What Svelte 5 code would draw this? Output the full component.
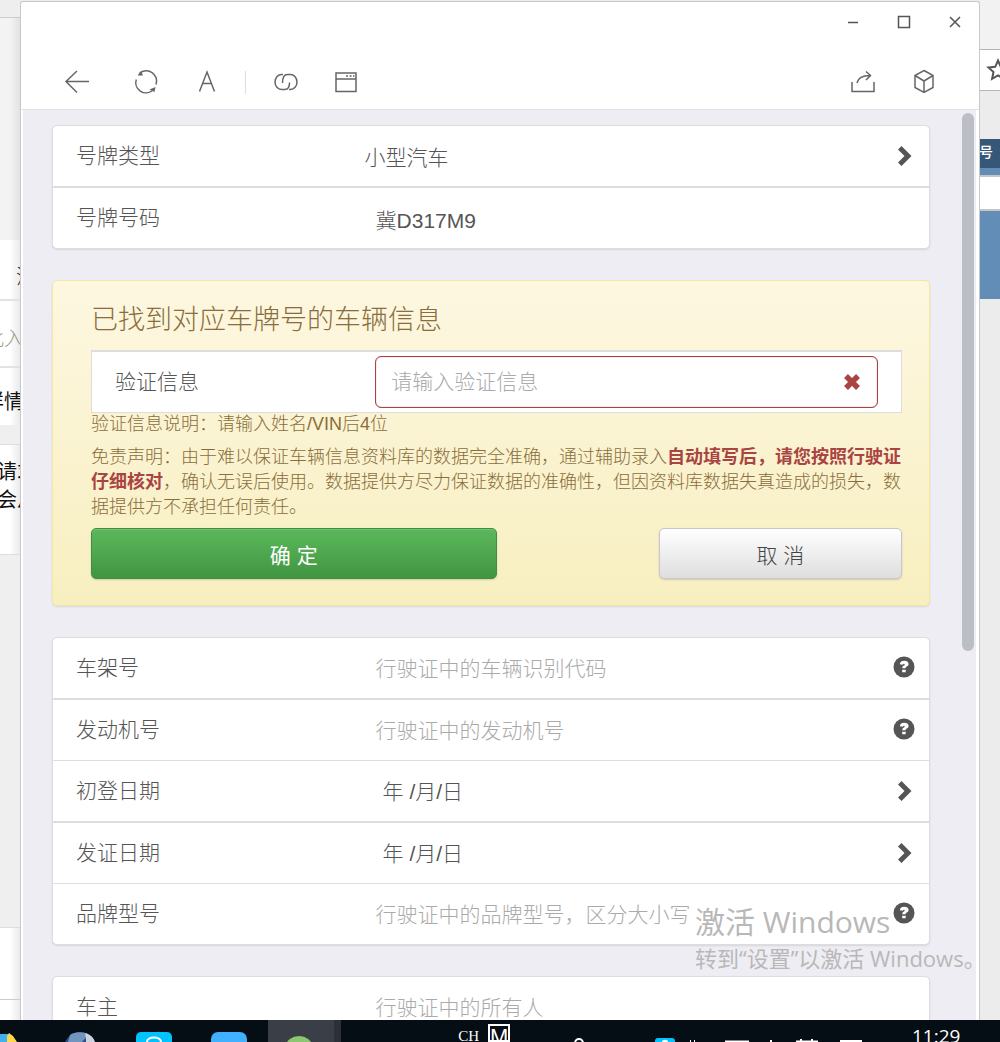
<script>
    let plateType = '小型汽车';
    let plateNo = '冀D317M9';
    let verify = '';

    let fields = [
        {id: 'vin', label: '车架号', hint: '行驶证中的车辆识别代码', icon: 'help'},
        {id: 'engine', label: '发动机号', hint: '行驶证中的发动机号', icon: 'help'},
        {id: 'firstDate', label: '初登日期', hint: '年 /月/日', icon: 'next', date: true},
        {id: 'issueDate', label: '发证日期', hint: '年 /月/日', icon: 'next', date: true},
        {id: 'model', label: '品牌型号', hint: '行驶证中的品牌型号，区分大小写', icon: 'help'}
    ];
    let values = {};
</script>

{#snippet next()}
    <svg class="mark" viewBox="0 0 22 22"><path d="M5 4.500L8.500 1l10 10-10 10L5 17.500l6.500-6.500z" fill="#555"/></svg>
{/snippet}

{#snippet help()}
    <svg class="mark help" viewBox="0 0 22 22">
        <circle cx="11" cy="11" r="10.500" fill="#555"/>
        <path d="M6.800 8.200C7 5.900 8.900 4.800 11.200 4.800c2.600 0 4.400 1.200 4.400 3.300 0 2.400-3 2.300-3 4.100H9.200c0-2.400 2.500-2.700 2.500-3.700 0-1-1.700-.9-1.900.3zM9.200 13.700h3.500v2.600H9.200z" fill="#fff"/>
    </svg>
{/snippet}

<div class="desktop">
    <div class="stage">
        <div class="behind left">
            <div class="l-top"></div>
            <div class="l-grey"></div>
            <div class="l-row first"><span>注</span></div>
            <div class="l-row second"><span>此入</span></div>
            <div class="l-row third"><span>详情</span></div>
            <div class="l-band"></div>
            <div class="l-text"><span>请求</span><span>会从</span></div>
            <div class="l-mid"></div>
            <div class="l-low"></div>
        </div>

        <main class="window">
            <header>
                <div class="controls">
                    <button aria-label="最小化"><svg width="12" height="14"><path d="M1 7.500h10"/></svg></button>
                    <button aria-label="最大化"><svg width="14" height="14"><path d="M1.500 1.500h11v11h-11z"/></svg></button>
                    <button aria-label="关闭"><svg width="12" height="14"><path d="M1 2l10 10M11 2L1 12"/></svg></button>
                </div>
                <nav>
                    <button class="back" aria-label="返回"><svg width="26" height="26"><path d="M25 12.500H2M13 2L2 12.500 13 23.500"/></svg></button>
                    <button class="reload" aria-label="刷新">
                        <svg width="26" height="26">
                            <path d="M6.500 4.500A10.200 10.200 0 0 1 23 15.500M3.300 10.500A10.200 10.200 0 0 0 19.500 21.500"/>
                            <path class="solid" d="M4.500 6.500L8 2l2 4.500zM22.500 18l-1 5-5-2.500z"/>
                        </svg>
                    </button>
                    <button class="font" aria-label="字体"><svg width="20" height="26"><path d="M2.500 22.500L10 3l7.500 19.500M5.500 14.500h9"/></svg></button>
                    <i></i>
                    <button class="link" aria-label="复制链接">
                        <svg width="26" height="26"><path d="M10 5.500H8.500a6.500 7.500 0 0 0 0 15H12c2.800 0 4.500-2.500 4.500-7M9.500 14c0-5.500 2-8.500 5-8.500h3a6.500 7.500 0 0 1 0 15H16"/></svg>
                    </button>
                    <button class="browser" aria-label="浏览器">
                        <svg width="24" height="26"><path d="M2 4h20v18.500H2zM2 10h20"/><path d="M12 7h2M15.500 7h2M19 7h1.500"/></svg>
                    </button>
                    <button class="share" aria-label="分享">
                        <svg width="26" height="26"><path d="M2 13v9.500h22V13M7 14c1-5 5-7.500 13-7.500M16 2.500l4.500 4-4.500 4.500"/></svg>
                    </button>
                    <button class="cube" aria-label="收藏">
                        <svg width="22" height="26"><path d="M11 1.500l9 5v12l-9 5-9-5v-12zM2 6.500l9 5.500 9-5.500M11 12v11.500"/></svg>
                    </button>
                </nav>
            </header>

            <div class="page">
                <form>
                    <section class="card">
                        <div class="row">
                            <label for="plateType">号牌类型</label>
                            <select id="plateType" bind:value={plateType}>
                                <option>小型汽车</option>
                                <option>大型汽车</option>
                            </select>
                            {@render next()}
                        </div>
                        <div class="row">
                            <label for="plateNo">号牌号码</label>
                            <input id="plateNo" type="text" bind:value={plateNo}>
                        </div>
                    </section>

                    <section class="found">
                        <h1>已找到对应车牌号的车辆信息</h1>
                        <div class="row verify">
                            <label for="verify">验证信息</label>
                            <div class="invalid">
                                <input id="verify" type="text" placeholder="请输入验证信息" bind:value={verify}>
                                <svg class="cross" viewBox="0 0 18 18"><path d="M3 3l12 12M15 3L3 15" stroke="#a94442" stroke-width="5.500"/></svg>
                            </div>
                        </div>
                        <p class="tip">验证信息说明：请输入姓名/VIN后4位</p>
                        <p class="legal">免责声明：由于难以保证车辆信息资料库的数据完全准确，通过辅助录入<strong>自动填写后，请您按照行驶证仔细核对</strong>，确认无误后使用。数据提供方尽力保证数据的准确性，但因资料库数据失真造成的损失，数据提供方不承担任何责任。</p>
                        <div class="actions">
                            <button type="button" class="ok">确 定</button>
                            <button type="button" class="cancel">取 消</button>
                        </div>
                    </section>

                    <section class="card">
                        {#each fields as f}
                            <div class="row">
                                <label for={f.id}>{f.label}</label>
                                <input id={f.id} class:date={f.date} type="text" placeholder={f.hint} bind:value={values[f.id]}>
                                {#if f.icon === 'help'}
                                    {@render help()}
                                {:else}
                                    {@render next()}
                                {/if}
                            </div>
                        {/each}
                    </section>

                    <section class="card">
                        <div class="row">
                            <label for="owner">车主</label>
                            <input id="owner" type="text" placeholder="行驶证中的所有人" bind:value={values.owner}>
                        </div>
                    </section>
                </form>
                <div class="thumb"></div>
            </div>
        </main>

        <div class="behind right">
            <div class="r-top"></div>
            <div class="r-star"><svg width="24" height="24"><path d="M12 2.500l2.800 6.300 6.700.7-5 4.500 1.400 6.800-5.900-3.500-5.900 3.500L7.500 14l-5-4.500 6.700-.7z" fill="none" stroke="#555" stroke-width="2"/></svg></div>
            <div class="r-grey"></div>
            <div class="r-head"><span>号</span></div>
            <div class="r-field"></div>
            <div class="r-blue"></div>
        </div>

        <div class="watermark">
            <div class="big">激活 Windows</div>
            <div>转到“设置”以激活 Windows。</div>
        </div>
    </div>

    <footer>
        <svg class="apps" width="350" height="22">
            <path d="M0 14h8v8H0z" fill="#3fb2ee"/>
            <path d="M7 22V16l2-3 4 3 4 6z" fill="#ffd84a"/>
            <circle cx="80" cy="28" r="16" fill="#2d4f86"/>
            <path d="M70 15c4-3 14-4 18 0l-6 7H68z" fill="#7195be"/>
            <path d="M86 13c5 2 8 5 9 9h-9c0-3 0-6-1-8z" fill="#ccd3de"/>
            <rect x="136" y="12" width="36" height="20" rx="5" fill="#00c3ff"/>
            <path d="M147 22c0-6 14-6 14 0" fill="none" stroke="#fff" stroke-width="2"/>
            <rect x="211" y="12" width="36" height="20" rx="7" fill="#41b1ff"/>
            <path d="M268 0h66v22h-66z" fill="#3a3e46"/>
            <path d="M334 0h7v22h-7z" fill="#2d3038"/>
            <ellipse cx="299" cy="26" rx="13" ry="10" fill="#8cc671"/>
        </svg>
        <div class="lang"><span>CH</span><b>M</b></div>
        <svg class="tray" width="300" height="22">
            <circle cx="14" cy="23" r="4" fill="none" stroke="#fff" stroke-width="2"/>
            <rect x="90" y="18" width="20" height="10" rx="3" fill="#00c3ff"/>
            <path d="M97 22c0-3 6-3 6 0" fill="#fff"/>
            <path d="M125 21h1M129 21h1M160 21.500h24M205 21h2M231 21.500h22M236 19v3M247 19v3M275 21h22" stroke="#fff" stroke-width="2"/>
        </svg>
        <time>11:29</time>
    </footer>
</div>

<style>
    :global(body) {
        margin: 0;
    }

    .desktop {
        height: 100vh;
        display: flex;
        flex-direction: column;
        overflow: hidden;
        font-family: "Liberation Sans", "Noto Sans CJK SC", sans-serif;
        font-weight: 300;
        color: #555;
    }

    .desktop * {
        box-sizing: border-box;
    }

    .stage {
        position: relative;
        flex: 1;
        min-height: 0;
        display: flex;
        background: #ececec;
    }

    .behind {
        width: 20px;
        flex: none;
        display: flex;
        flex-direction: column;
        overflow: hidden;
        white-space: nowrap;
        font-family: "Noto Sans CJK SC", sans-serif;
        font-size: 20px;
        line-height: 28px;
        color: #111;
    }

    .left {
        background: linear-gradient(to right, #fff, #fff 50%, #eaeaea);
    }

    .left > div {
        display: flex;
        flex-direction: column;
        align-items: flex-end;
        justify-content: center;
        flex: none;
    }

    .left span {
        margin-right: -4px;
    }

    .l-top {
        height: 18px;
        background: #eee;
        border-bottom: 1px solid #ccc;
    }

    .l-grey {
        height: 222px;
        background: linear-gradient(to right, #f3f3f3, #f3f3f3 50%, #e2e2e2);
    }

    .l-row {
        border-bottom: 2px solid #e2e2e2;
    }

    .first {
        height: 61px;
        padding-top: 12px;
    }

    .left .first {
        align-items: flex-start;
        padding-left: 16px;
    }

    .second {
        height: 67px;
        padding-top: 8px;
        color: #a29c8a;
    }

    .third {
        height: 57px;
        padding-top: 8px;
        border: 0;
        font-weight: 400;
    }

    .l-band, .l-mid {
        height: 20px;
        background: #efefef;
        border-bottom: 1px solid #ddd;
    }

    .l-text {
        height: 109px;
        padding-bottom: 29px;
        font-weight: 400;
    }

    .l-text span {
        margin-right: -17px;
    }

    .left .l-mid {
        height: 374px;
        border-top: 1px solid #ddd;
    }

    .l-low {
        height: 72px;
        border-bottom: 1px solid #ccc;
    }

    .window {
        flex: 1;
        min-width: 0;
        margin-top: 1px;
        display: flex;
        flex-direction: column;
        background: #fff;
        border: 1px solid #c9c9c9;
        border-bottom: 0;
        border-radius: 3px 3px 0 0;
    }

    header {
        flex: none;
        padding: 13px 18px 14px 43px;
        border-bottom: 1px solid #e2e2e4;
    }

    header button {
        display: flex;
        padding: 0;
        border: 0;
        background: none;
    }

    header svg {
        fill: none;
        stroke: #666;
        stroke-width: 1.5;
    }

    .controls svg {
        stroke: #555;
    }

    header .solid {
        fill: #666;
        stroke: none;
    }

    .controls {
        display: flex;
        justify-content: flex-end;
        gap: 38px;
        margin-bottom: 40px;
    }

    nav {
        display: flex;
        align-items: center;
    }

    nav i {
        width: 1px;
        height: 23px;
        margin: 0 27px 0 28px;
        background: #ddd;
    }

    .reload {
        margin: 0 38px 0 43px;
    }

    .browser {
        margin-left: 35px;
    }

    .share {
        margin: 0 37px 0 auto;
    }

    .cube {
        margin-right: 26px;
    }

    .page {
        position: relative;
        flex: 1;
        min-height: 0;
        margin: 0 3px 0 2px;
        background: #eeedf3;
        overflow: hidden;
    }

    form {
        display: flex;
        flex-direction: column;
        gap: 31px;
        padding: 15px 46px 0 29px;
    }

    .thumb {
        position: absolute;
        top: 3px;
        right: 2px;
        width: 12px;
        height: 538px;
        border-radius: 6px;
        background: #bbbec4;
    }

    .card, .found {
        border: 1px solid #ddd;
        border-radius: 5px;
        background: #fff;
        box-shadow: 0 1px 2px rgba(0, 0, 0, .1);
    }

    .row {
        display: grid;
        grid-template-columns: 35% 1fr 36px;
        align-items: center;
        box-sizing: content-box;
        height: 60px;
        font-size: 21px;
    }

    .card .row + .row {
        border-top: 1px solid #ddd;
    }

    .card .row:nth-child(even) {
        border-top-width: 2px;
    }

    label {
        padding: 0 0 4px 23px;
    }

    input, select {
        width: 100%;
        min-width: 0;
        height: 50px;
        padding: 2px 16px 0;
        border: 0;
        outline: 0;
        background: transparent;
        font: inherit;
        color: inherit;
        appearance: none;
    }

    select {
        padding-left: 5px;
    }

    input::placeholder {
        color: #aaa;
        opacity: 1;
    }

    .date {
        padding-left: 23px;
    }

    .date::placeholder {
        color: #555;
    }

    .mark {
        width: 22px;
        height: 22px;
    }

    .help {
        margin-bottom: 3px;
    }

    .found {
        padding: 24px 27px 26px 38px;
        border-color: #f5e79e;
        background: linear-gradient(#fdf7e1, #f8efc0);
        color: #8a6d3b;
    }

    h1 {
        margin: 0 0 15px;
        font-size: 27px;
        line-height: 30px;
        font-weight: 300;
    }

    .verify {
        grid-template-columns: 35% 1fr 23px;
        border: 1px solid #ddd;
        border-top-width: 2px;
        background: #fff;
        color: #555;
    }

    .invalid {
        display: flex;
        align-items: center;
        height: 52px;
        padding-right: 16px;
        border: 1px solid #a94442;
        border-radius: 6px;
        box-shadow: inset 0 0 1px #a94442;
    }

    .invalid input {
        padding: 0 15px;
    }

    .cross {
        width: 18px;
        height: 18px;
        flex: none;
    }

    .tip, .legal {
        margin: 0;
        font-size: 18px;
        line-height: 22px;
    }

    .legal {
        margin: 10px 0 8px;
        line-height: 25px;
    }

    strong {
        font-weight: 700;
        color: #a94442;
    }

    .actions {
        display: flex;
        justify-content: space-between;
    }

    .actions button {
        width: 50%;
        height: 51px;
        padding: 0;
        border: 1px solid #3e8f3e;
        border-radius: 5px;
        background: linear-gradient(#5cb85c, #419641);
        box-shadow: inset 0 1px 0 rgba(255, 255, 255, .15), 0 1px 2px rgba(0, 0, 0, .15);
        font: inherit;
        font-size: 21px;
        font-weight: 400;
        color: #fff;
    }

    .actions .cancel {
        width: 30%;
        border-color: #c6c6cc;
        background: linear-gradient(#fff, #dedede);
        font-weight: 300;
        color: #444;
    }

    .r-top {
        height: 50px;
        background: #f2f2f2;
        border-bottom: 1px solid #b5b5b5;
    }

    .r-star {
        height: 41px;
        padding: 8px 0 0 6px;
        background: #fff;
        border-bottom: 1px solid #b5b5b5;
    }

    .r-star svg {
        display: block;
    }

    .r-grey {
        height: 48px;
    }

    .r-head {
        height: 36px;
        background: #375778;
        border-bottom: 7px solid #628db7;
        font-size: 14px;
        line-height: 25px;
        font-weight: 500;
        color: #fff;
    }

    .r-head span {
        margin-left: -1px;
    }

    .r-field {
        height: 36px;
        border: solid #c6c6c6;
        border-width: 2px 0;
        background: #fff;
    }

    .r-blue {
        height: 88px;
        background: #628db7;
    }

    /* activation notice floats above every window */
    .watermark {
        position: absolute;
        right: 12px;
        bottom: 46px;
        width: 293px;
        font-family: "Open Sans", "Noto Sans CJK SC", sans-serif;
        font-size: 22px;
        line-height: 32px;
        font-weight: 400;
        white-space: nowrap;
        color: #b8b8b8;
        pointer-events: none;
    }

    .big {
        font-size: 30px;
        line-height: 40px;
    }

    footer {
        flex: none;
        height: 22px;
        display: flex;
        overflow: hidden;
        background: #050d15;
        color: #fff;
    }

    .apps, .tray {
        flex: none;
    }

    .lang {
        display: flex;
        gap: 9px;
        margin-left: auto;
        padding-top: 4px;
        font-family: "Liberation Serif", serif;
        font-size: 16px;
        line-height: 24px;
    }

    .lang span {
        width: 18px;
        display: flex;
        justify-content: flex-end;
        font-size: 15px;
    }

    .lang b {
        width: 22px;
        border: 2px solid #fff;
        font-family: "Liberation Sans", sans-serif;
        font-size: 22px;
        line-height: 22px;
        font-weight: 400;
        text-align: center;
    }

    .tray {
        margin: 0 47px 0 55px;
    }

    time {
        width: 88px;
        padding-top: 4px;
        font: 19px/24px "Open Sans", sans-serif;
    }
</style>
